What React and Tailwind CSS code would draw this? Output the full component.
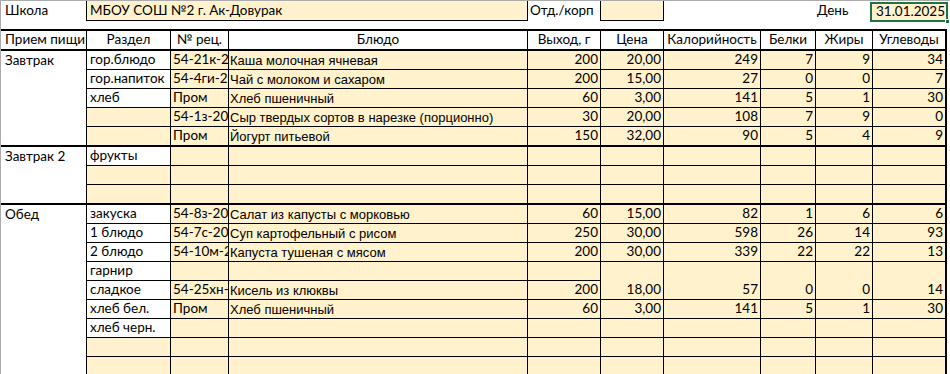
import React from "react";

const GRID =
  "grid grid-cols-[86px_84px_58px_299px_73px_63px_97px_55px_57px_74px] grid-rows-[100%]";
const CAL = "font-['Lato',sans-serif] text-[13.5px] leading-none whitespace-nowrap";
const ARIAL = "font-['Liberation_Sans',Arial,sans-serif] text-[13px] leading-none whitespace-nowrap";
const CREAM = "bg-[#fff2cc]";

const breakfast = [
  ["гор.блюдо", "54-21к-2020", "Каша молочная ячневая", "200", "20,00", "249", "7", "9", "34"],
  ["гор.напиток", "54-4ги-2020", "Чай с молоком и сахаром", "200", "15,00", "27", "0", "0", "7"],
  ["хлеб", "Пром", "Хлеб пшеничный", "60", "3,00", "141", "5", "1", "30"],
  ["", "54-1з-2020", "Сыр твердых сортов в нарезке (порционно)", "30", "20,00", "108", "7", "9", "0"],
  ["", "Пром", "Йогурт питьевой", "150", "32,00", "90", "5", "4", "9"],
];

const breakfast2 = [
  ["фрукты", "", "", "", "", "", "", "", ""],
  ["", "", "", "", "", "", "", "", ""],
  ["", "", "", "", "", "", "", "", ""],
];

const lunch = [
  ["закуска", "54-8з-2020", "Салат из капусты с морковью", "60", "15,00", "82", "1", "6", "6"],
  ["1 блюдо", "54-7с-2020", "Суп картофельный с рисом", "250", "30,00", "598", "26", "14", "93"],
  ["2 блюдо", "54-10м-2020", "Капуста тушеная с мясом", "200", "30,00", "339", "22", "22", "13"],
  ["гарнир", "", "", "", "", "", "", "", ""],
  ["сладкое", "54-25хн-2020", "Кисель из клюквы", "200", "18,00", "57", "0", "0", "14"],
  ["хлеб бел.", "Пром", "Хлеб пшеничный", "60", "3,00", "141", "5", "1", "30"],
  ["хлеб черн.", "", "", "", "", "", "", "", ""],
  ["", "", "", "", "", "", "", "", ""],
  ["", "", "", "", "", "", "", "", ""],
];

function DataRow({ meal, cells, last, noBottomFrom }) {
  const h = last ? "h-[18px]" : "h-[19px]";
  const bb = (i) => (last || (noBottomFrom !== undefined && i >= noBottomFrom) ? "" : "border-b");
  return (
    <div className={`${GRID} ${h}`}>
      <div className={`border-r border-black bg-white pl-[4px] flex items-center overflow-hidden ${CAL}`}>{meal}</div>
      {cells.map((c, i) => {
        const col = i + 1; // 1=B ... 9=J
        let bg = CREAM;
        if (col === 1) bg = c ? "bg-white" : CREAM;
        const right = col === 9 ? "border-r-2" : "border-r";
        let align = "justify-end pr-[2px]";
        let font = CAL;
        if (col === 1) align = "justify-start pl-[3px]";
        if (col === 2) align = "justify-start pl-[2px]";
        if (col === 3) {
          align = "justify-start pl-[1px]";
          font = ARIAL;
        }
        return (
          <div
            key={i}
            className={`${right} ${bb(col)} border-black ${bg} flex items-center overflow-hidden ${align} ${font}`}
          >
            {c}
          </div>
        );
      })}
    </div>
  );
}

function Section({ meal, rows, special }) {
  return (
    <div className="flex flex-col">
      {rows.map((r, i) => (
        <DataRow
          key={i}
          meal={i === 0 ? meal : ""}
          cells={r}
          last={i === rows.length - 1}
          noBottomFrom={special && special[i]}
        />
      ))}
    </div>
  );
}

function Thick() {
  return <div className="h-[2px] w-[946px] bg-black" />;
}

const headers = ["Раздел", "№ рец.", "Блюдо", "Выход, г", "Цена", "Калорийность", "Белки", "Жиры", "Углеводы"];

export default function App() {
  return (
    <div className="w-[950px] h-[374px] overflow-hidden bg-white border-t border-l border-[#ababab] text-black">
      {/* Row 1 */}
      <div className={`${GRID} h-[20px]`}>
        <div className={`border-r border-black pl-[4px] flex items-center ${CAL}`}>Школа</div>
        <div className={`col-span-3 border-r border-b border-black ${CREAM} pl-[3px] flex items-center ${CAL}`}>
          МБОУ СОШ №2 г. Ак-Довурак
        </div>
        <div className={`border-r border-black pl-[2px] flex items-center ${CAL}`}>Отд./корп</div>
        <div className={`border-r border-b border-black ${CREAM}`} />
        <div />
        <div />
        <div className={`pl-[1px] flex items-center ${CAL}`}>День</div>
        <div className="relative">
          <div className={`absolute left-[-3px] right-[-1px] top-[1px] bottom-[-1px] border-2 border-[#217346] ${CREAM} flex items-center justify-end pr-[1px] ${CAL}`}>
            31.01.2025
          </div>
          <div className="absolute right-[-3px] bottom-[-3px] w-[5px] h-[5px] bg-[#217346] border border-white" />
        </div>
      </div>
      {/* Row 2 */}
      <div className="h-[8px]" />
      <Thick />
      {/* Header */}
      <div className={`${GRID} h-[18px]`}>
        <div className={`border-r border-black pl-[4px] flex items-center overflow-hidden ${CAL}`}>Прием пищи</div>
        {headers.map((h, i) => (
          <div
            key={i}
            className={`${i === 8 ? "border-r-2" : "border-r"} border-black flex items-center justify-center overflow-hidden ${CAL}`}
          >
            {h}
          </div>
        ))}
      </div>
      <Thick />
      <Section meal="Завтрак" rows={breakfast} />
      <Thick />
      <Section meal="Завтрак 2" rows={breakfast2} />
      <Thick />
      <Section meal="Обед" rows={lunch} special={{ 3: 5 }} />
    </div>
  );
}
